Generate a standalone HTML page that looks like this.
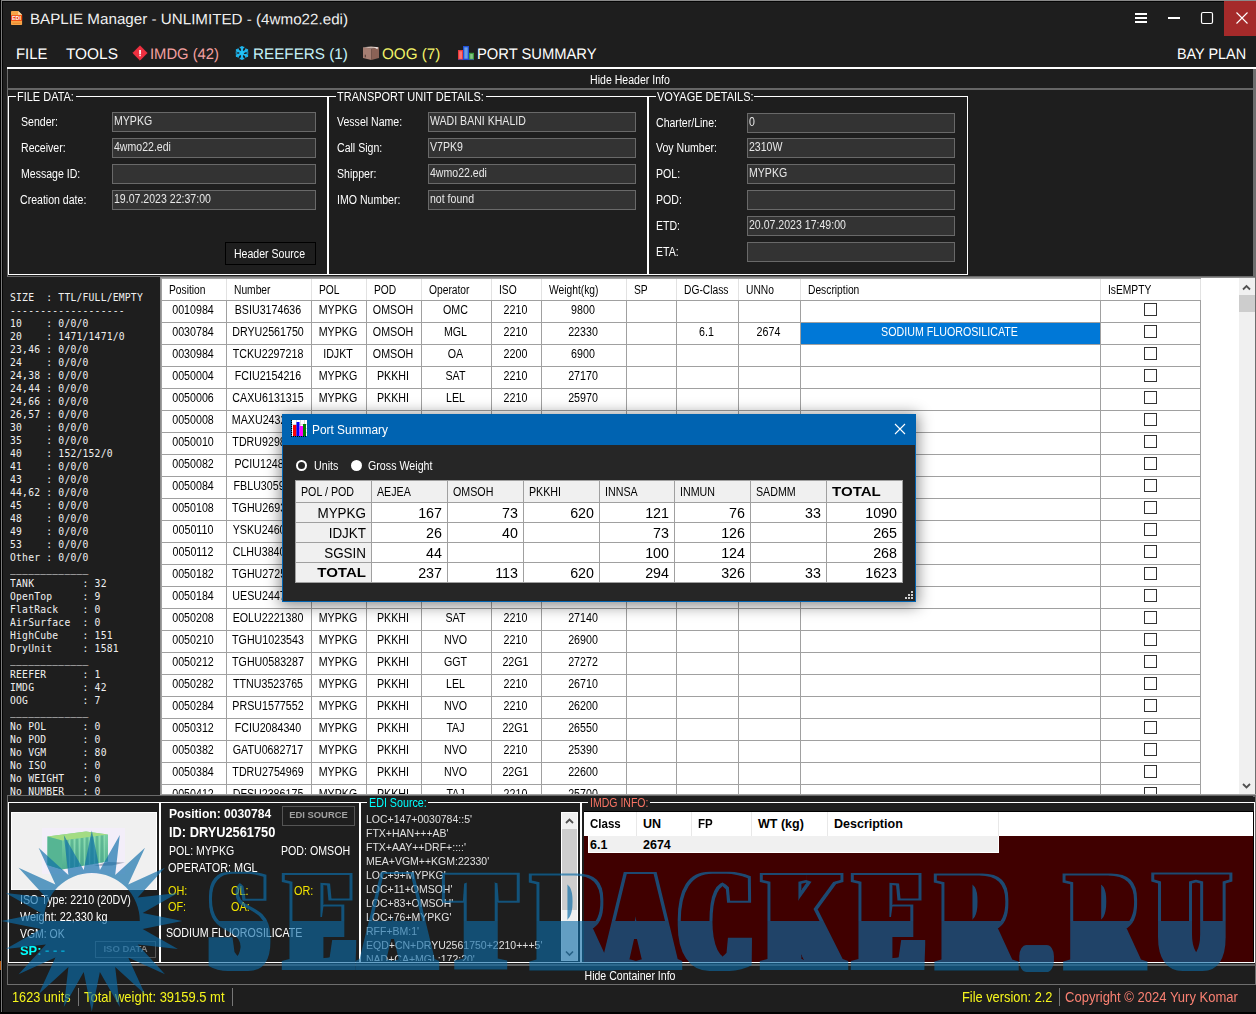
<!DOCTYPE html><html><head><meta charset="utf-8"><title>BAPLIE Manager</title><style>
*{box-sizing:border-box;margin:0;padding:0}
html,body{width:1256px;height:1014px;overflow:hidden;background:#1e1e1e}
body{position:relative;font-family:"Liberation Sans",sans-serif;font-size:12px;color:#fff;line-height:1}
.a{position:absolute}
.t{position:absolute;white-space:pre;transform-origin:0 0;line-height:14px;height:14px}
.tc{position:absolute;white-space:pre;text-align:center;transform-origin:50% 0;line-height:14px;height:14px}
.tr{position:absolute;white-space:pre;text-align:right;transform-origin:100% 0;line-height:14px;height:14px}
.tb{position:absolute;height:20px;background:#333;border:1px solid #696969}
.mono{font-family:"DejaVu Sans Mono","Liberation Mono",monospace;font-size:9.7px;letter-spacing:0.21px;line-height:13px;white-space:pre;color:#f0f0f0}
.gb{position:absolute;border:1px solid #fff}
.gl{position:absolute;background:#1e1e1e;height:14px;white-space:pre;line-height:14px;transform-origin:0 0}
.menu{position:absolute;top:45px;font-size:15.3px;line-height:18px;height:18px;white-space:pre;transform-origin:0 0}
</style></head><body>
<div class="a" style="left:0px;top:0px;width:1256px;height:1px;background:#8a8a8a;"></div>
<div class="a" style="left:0px;top:1px;width:1256px;height:1px;background:#050505;"></div>
<div class="a" style="left:0px;top:0px;width:1px;height:1014px;background:#000;"></div>
<div class="a" style="left:1px;top:0px;width:1px;height:1014px;background:#7a7a7a;"></div>
<div class="a" style="left:2px;top:1px;width:1px;height:1013px;background:#050505;"></div>
<div class="a" style="left:0px;top:1012px;width:1256px;height:2px;background:#000;"></div>
<svg class="a" style="left:10px;top:10px" width="14" height="16" viewBox="10 10 14 16">
<path d="M11 11.800Q11 11 11.800 11H18.200L22.100 14.700V24.300Q22.100 25.100 21.300 25.100H11.800Q11 25.100 11 24.300Z" fill="#f8a448"/>
<path d="M18.200 11L22.100 14.700H18.200Z" fill="#fdd9a8"/>
<rect x="11" y="15.300" width="11.100" height="5.500" fill="#f23f0c"/>
<rect x="12.500" y="22.800" width="8" height="0.900" fill="#e8852a"/>
<text x="16.500" y="20.100" font-family="Liberation Sans, sans-serif" font-weight="bold" font-size="5.400" fill="#fff" text-anchor="middle">EDI</text>
</svg>
<div class="t" style="left:29.5px;top:10px;color:#f0f0f0;font-size:15px;line-height:18px;height:18px;transform:scaleX(1.012) rotate(0.05deg);">BAPLIE Manager - UNLIMITED - (4wmo22.edi)</div>
<svg class="a" style="left:1120px;top:1px" width="136" height="36" viewBox="0 0 136 36">
<rect x="104" y="0" width="32" height="35" fill="#a52a2a"/>
<g stroke="#fff" stroke-width="2" fill="none">
<path d="M15 13H27M15 17H27M15 21H27"/>
<path d="M48 17H60"/>
</g>
<rect x="81.5" y="11.5" width="11" height="11" rx="1.5" fill="none" stroke="#fff" stroke-width="1.2"/>
<path d="M116.500 11.500L127.500 22.500M127.500 11.500L116.500 22.500" stroke="#fff" stroke-width="1.1" fill="none"/>
</svg>
<div class="menu" style="left:16px;color:#fff;transform:scaleX(0.971) rotate(0.05deg)">FILE</div>
<div class="menu" style="left:66px;color:#fff;transform:scaleX(1.007) rotate(0.05deg)">TOOLS</div>
<div class="menu" style="left:150px;color:#f4a0a0;transform:scaleX(0.966) rotate(0.05deg)">IMDG (42)</div>
<div class="menu" style="left:253px;color:#c4f2f8;transform:scaleX(0.997) rotate(0.05deg)">REEFERS (1)</div>
<div class="menu" style="left:382px;color:#f4f468;transform:scaleX(0.996) rotate(0.05deg)">OOG (7)</div>
<div class="menu" style="left:477px;color:#fff;transform:scaleX(0.963) rotate(0.05deg)">PORT SUMMARY</div>
<div class="menu" style="left:1176.5px;color:#fff;transform:scaleX(0.941) rotate(0.05deg)">BAY PLAN</div>
<svg class="a" style="left:132px;top:45px" width="16" height="16" viewBox="0 0 16 16">
<path d="M8 0.8L15.2 8L8 15.2L0.8 8Z" fill="#ee3040" stroke="#ee3040" stroke-width="0.8" stroke-linejoin="round"/>
<rect x="7.1" y="5" width="1.9" height="4.400" fill="#fbe4e6"/><rect x="7.1" y="10.100" width="1.9" height="1.100" fill="#fbe4e6"/></svg>
<svg class="a" style="left:234px;top:45px" width="16" height="16" viewBox="0 0 16 16">
<g stroke="#1fb6ee" stroke-linecap="round" fill="none">
<path d="M8 2V14M2.800 5L13.200 11M13.200 5L2.800 11" stroke-width="2.100"/>
<path d="M6.200 2.300L8 3.900L9.800 2.300M6.200 13.700L8 12.100L9.800 13.700M2.200 7.200L4.500 6.300L4.100 3.800M13.800 8.800L11.500 9.700L11.900 12.200M13.800 7.200L11.500 6.300L11.900 3.800M2.200 8.800L4.500 9.700L4.100 12.200" stroke-width="1.300"/>
</g><circle cx="8" cy="8" r="2" fill="#22c4f6"/></svg>
<svg class="a" style="left:362px;top:45px" width="18" height="16" viewBox="362 45 18 16">
<path d="M363 47.300L371.300 48.500V59.900L363 58.100Z" fill="#a57e72"/>
<path d="M371.300 48.500L379 47.300V58.100L371.300 59.900Z" fill="#8b6256"/>
<path d="M363 47.300L371 46.600L379 47.300L371.300 48.600Z" fill="#cdb6ad"/>
<path d="M373.500 47.300L377.800 47.100L377.600 49.300Z" fill="#efe6e2"/>
<rect x="364.800" y="54.700" width="0.900" height="2.600" fill="#40302c"/>
</svg>
<svg class="a" style="left:457px;top:45px" width="18" height="16" viewBox="457 45 18 16">
<rect x="458" y="50" width="5.200" height="10" fill="#ee3a3a"/><rect x="459.200" y="51.300" width="2.800" height="7.500" fill="#fa7474"/>
<rect x="463" y="46" width="6" height="14" fill="#1f4fd6"/><rect x="464.300" y="47.300" width="3.400" height="11.400" fill="#6c9fe6"/>
<rect x="469" y="52.800" width="5" height="7.200" fill="#3c9c3c"/><rect x="470.200" y="54" width="2.600" height="4.800" fill="#86c486"/>
<rect x="458" y="59.200" width="16" height="0.900" fill="#2a3fc0" opacity=".7"/>
</svg>
<div class="a" style="left:7px;top:67px;width:1249px;height:2px;background:#fff;"></div>
<div class="a" style="left:7px;top:69px;width:1px;height:208px;background:#6a6a6a;"></div>
<div class="a" style="left:7px;top:88px;width:1249px;height:2px;background:#666;"></div>
<div class="a" style="left:1253px;top:69px;width:2px;height:728px;background:#6e6e6e;"></div>
<div class="tc" style="left:480px;top:73px;transform:scaleX(0.88);width:300px;">Hide Header Info</div>
<div class="gb" style="left:8px;top:96px;width:320px;height:179px;border-color:#fff"></div>
<div class="gl" style="left:16px;top:90px;width:60px"></div>
<div class="t" style="left:17px;top:90px;transform:scaleX(0.878);color:#fff;font-size:12.5px;">FILE DATA:</div>
<div class="gb" style="left:328px;top:96px;width:320px;height:179px;border-color:#fff"></div>
<div class="gl" style="left:336px;top:90px;width:150px"></div>
<div class="t" style="left:337px;top:90px;transform:scaleX(0.878);color:#fff;font-size:12.5px;">TRANSPORT UNIT DETAILS:</div>
<div class="gb" style="left:648px;top:96px;width:320px;height:179px;border-color:#fff"></div>
<div class="gl" style="left:656px;top:90px;width:98px"></div>
<div class="t" style="left:657px;top:90px;transform:scaleX(0.878);color:#fff;font-size:12.5px;">VOYAGE DETAILS:</div>
<div class="t" style="left:21px;top:115px;transform:scaleX(0.88);">Sender:</div>
<div class="tb" style="left:112px;top:112px;width:204px"></div>
<div class="t" style="left:114px;top:114px;transform:scaleX(0.88);color:#e8e8e8;">MYPKG</div>
<div class="t" style="left:21px;top:141px;transform:scaleX(0.88);">Receiver:</div>
<div class="tb" style="left:112px;top:138px;width:204px"></div>
<div class="t" style="left:114px;top:140px;transform:scaleX(0.88);color:#e8e8e8;">4wmo22.edi</div>
<div class="t" style="left:21px;top:167px;transform:scaleX(0.88);">Message ID:</div>
<div class="tb" style="left:112px;top:164px;width:204px"></div>
<div class="t" style="left:20px;top:193px;transform:scaleX(0.88);">Creation date:</div>
<div class="tb" style="left:112px;top:190px;width:204px"></div>
<div class="t" style="left:114px;top:192px;transform:scaleX(0.88);color:#e8e8e8;">19.07.2023 22:37:00</div>
<div class="t" style="left:337px;top:115px;transform:scaleX(0.88);">Vessel Name:</div>
<div class="tb" style="left:428px;top:112px;width:208px"></div>
<div class="t" style="left:430px;top:114px;transform:scaleX(0.88);color:#e8e8e8;">WADI BANI KHALID</div>
<div class="t" style="left:337px;top:141px;transform:scaleX(0.88);">Call Sign:</div>
<div class="tb" style="left:428px;top:138px;width:208px"></div>
<div class="t" style="left:430px;top:140px;transform:scaleX(0.88);color:#e8e8e8;">V7PK9</div>
<div class="t" style="left:337px;top:167px;transform:scaleX(0.88);">Shipper:</div>
<div class="tb" style="left:428px;top:164px;width:208px"></div>
<div class="t" style="left:430px;top:166px;transform:scaleX(0.88);color:#e8e8e8;">4wmo22.edi</div>
<div class="t" style="left:337px;top:193px;transform:scaleX(0.88);">IMO Number:</div>
<div class="tb" style="left:428px;top:190px;width:208px"></div>
<div class="t" style="left:430px;top:192px;transform:scaleX(0.88);color:#e8e8e8;">not found</div>
<div class="t" style="left:656px;top:116px;transform:scaleX(0.88);">Charter/Line:</div>
<div class="tb" style="left:747px;top:113px;width:208px"></div>
<div class="t" style="left:749px;top:115px;transform:scaleX(0.88);color:#e8e8e8;">0</div>
<div class="t" style="left:656px;top:141px;transform:scaleX(0.88);">Voy Number:</div>
<div class="tb" style="left:747px;top:138px;width:208px"></div>
<div class="t" style="left:749px;top:140px;transform:scaleX(0.88);color:#e8e8e8;">2310W</div>
<div class="t" style="left:656px;top:167px;transform:scaleX(0.88);">POL:</div>
<div class="tb" style="left:747px;top:164px;width:208px"></div>
<div class="t" style="left:749px;top:166px;transform:scaleX(0.88);color:#e8e8e8;">MYPKG</div>
<div class="t" style="left:656px;top:193px;transform:scaleX(0.88);">POD:</div>
<div class="tb" style="left:747px;top:190px;width:208px"></div>
<div class="t" style="left:656px;top:219px;transform:scaleX(0.88);">ETD:</div>
<div class="tb" style="left:747px;top:216px;width:208px"></div>
<div class="t" style="left:749px;top:218px;transform:scaleX(0.88);color:#e8e8e8;">20.07.2023 17:49:00</div>
<div class="t" style="left:656px;top:245px;transform:scaleX(0.88);">ETA:</div>
<div class="tb" style="left:747px;top:242px;width:208px"></div>
<div class="a" style="left:225px;top:242px;width:91px;height:23px;background:#1e1e1e;border:1px solid #000"></div>
<div class="tc" style="left:224px;top:247px;transform:scaleX(0.88);width:91px;">Header Source</div>
<div class="a" style="left:7px;top:276px;width:1249px;height:1px;background:#6a6a6a;"></div>
<div class="a mono" style="left:10px;top:290.5px;width:150px;height:504px;overflow:hidden">SIZE  : TTL/FULL/EMPTY
-------------------
10    : 0/0/0
20    : 1471/1471/0
23,46 : 0/0/0
24    : 0/0/0
24,38 : 0/0/0
24,44 : 0/0/0
24,66 : 0/0/0
26,57 : 0/0/0
30    : 0/0/0
35    : 0/0/0
40    : 152/152/0
41    : 0/0/0
43    : 0/0/0
44,62 : 0/0/0
45    : 0/0/0
48    : 0/0/0
49    : 0/0/0
53    : 0/0/0
Other : 0/0/0
<span style="position:relative;top:-2px;color:#fff">_____________</span>
TANK        : 32
OpenTop     : 9
FlatRack    : 0
AirSurface  : 0
HighCube    : 151
DryUnit     : 1581
<span style="position:relative;top:-2px;color:#fff">_____________</span>
REEFER      : 1
IMDG        : 42
OOG         : 7
<span style="position:relative;top:-2px;color:#fff">_____________</span>
No POL      : 0
No POD      : 0
No VGM      : 80
No ISO      : 0
No WEIGHT   : 0
No NUMBER   : 0</div>
<div class="a" style="left:160px;top:277px;width:1096px;height:517px;background:#fff;overflow:hidden;color:#000" id="grid">
<div class="a" style="left:0px;top:0px;width:1096px;height:1px;background:#8c8c8c"></div>
<div class="a" style="left:0px;top:1px;width:1041px;height:1px;background:#a0a0a0"></div>
<div class="a" style="left:0px;top:0px;width:1px;height:519px;background:#8c8c8c"></div>
<div class="a" style="left:1px;top:1px;width:1px;height:519px;background:#a0a0a0"></div>
<div class="a" style="left:66px;top:2px;width:1px;height:21px;background:#e2e2e2"></div>
<div class="a" style="left:151px;top:2px;width:1px;height:21px;background:#e2e2e2"></div>
<div class="a" style="left:206px;top:2px;width:1px;height:21px;background:#e2e2e2"></div>
<div class="a" style="left:261px;top:2px;width:1px;height:21px;background:#e2e2e2"></div>
<div class="a" style="left:331px;top:2px;width:1px;height:21px;background:#e2e2e2"></div>
<div class="a" style="left:381px;top:2px;width:1px;height:21px;background:#e2e2e2"></div>
<div class="a" style="left:466px;top:2px;width:1px;height:21px;background:#e2e2e2"></div>
<div class="a" style="left:516px;top:2px;width:1px;height:21px;background:#e2e2e2"></div>
<div class="a" style="left:578px;top:2px;width:1px;height:21px;background:#e2e2e2"></div>
<div class="a" style="left:640px;top:2px;width:1px;height:21px;background:#e2e2e2"></div>
<div class="a" style="left:940px;top:2px;width:1px;height:21px;background:#e2e2e2"></div>
<div class="a" style="left:1040px;top:2px;width:1px;height:21px;background:#e2e2e2"></div>
<div class="t" style="left:9px;top:6px;transform:scaleX(0.855);">Position</div>
<div class="t" style="left:74px;top:6px;transform:scaleX(0.855);">Number</div>
<div class="t" style="left:159px;top:6px;transform:scaleX(0.855);">POL</div>
<div class="t" style="left:214px;top:6px;transform:scaleX(0.855);">POD</div>
<div class="t" style="left:269px;top:6px;transform:scaleX(0.855);">Operator</div>
<div class="t" style="left:339px;top:6px;transform:scaleX(0.855);">ISO</div>
<div class="t" style="left:389px;top:6px;transform:scaleX(0.855);">Weight(kg)</div>
<div class="t" style="left:474px;top:6px;transform:scaleX(0.855);">SP</div>
<div class="t" style="left:524px;top:6px;transform:scaleX(0.855);">DG-Class</div>
<div class="t" style="left:586px;top:6px;transform:scaleX(0.855);">UNNo</div>
<div class="t" style="left:648px;top:6px;transform:scaleX(0.855);">Description</div>
<div class="t" style="left:948px;top:6px;transform:scaleX(0.855);">IsEMPTY</div>
<div class="a" style="left:1px;top:23px;width:1040px;height:1px;background:#a0a0a0"></div>
<div class="a" style="left:1px;top:45px;width:1040px;height:1px;background:#a0a0a0"></div>
<div class="a" style="left:1px;top:67px;width:1040px;height:1px;background:#a0a0a0"></div>
<div class="a" style="left:1px;top:89px;width:1040px;height:1px;background:#a0a0a0"></div>
<div class="a" style="left:1px;top:111px;width:1040px;height:1px;background:#a0a0a0"></div>
<div class="a" style="left:1px;top:133px;width:1040px;height:1px;background:#a0a0a0"></div>
<div class="a" style="left:1px;top:155px;width:1040px;height:1px;background:#a0a0a0"></div>
<div class="a" style="left:1px;top:177px;width:1040px;height:1px;background:#a0a0a0"></div>
<div class="a" style="left:1px;top:199px;width:1040px;height:1px;background:#a0a0a0"></div>
<div class="a" style="left:1px;top:221px;width:1040px;height:1px;background:#a0a0a0"></div>
<div class="a" style="left:1px;top:243px;width:1040px;height:1px;background:#a0a0a0"></div>
<div class="a" style="left:1px;top:265px;width:1040px;height:1px;background:#a0a0a0"></div>
<div class="a" style="left:1px;top:287px;width:1040px;height:1px;background:#a0a0a0"></div>
<div class="a" style="left:1px;top:309px;width:1040px;height:1px;background:#a0a0a0"></div>
<div class="a" style="left:1px;top:331px;width:1040px;height:1px;background:#a0a0a0"></div>
<div class="a" style="left:1px;top:353px;width:1040px;height:1px;background:#a0a0a0"></div>
<div class="a" style="left:1px;top:375px;width:1040px;height:1px;background:#a0a0a0"></div>
<div class="a" style="left:1px;top:397px;width:1040px;height:1px;background:#a0a0a0"></div>
<div class="a" style="left:1px;top:419px;width:1040px;height:1px;background:#a0a0a0"></div>
<div class="a" style="left:1px;top:441px;width:1040px;height:1px;background:#a0a0a0"></div>
<div class="a" style="left:1px;top:463px;width:1040px;height:1px;background:#a0a0a0"></div>
<div class="a" style="left:1px;top:485px;width:1040px;height:1px;background:#a0a0a0"></div>
<div class="a" style="left:1px;top:507px;width:1040px;height:1px;background:#a0a0a0"></div>
<div class="a" style="left:1px;top:529px;width:1040px;height:1px;background:#a0a0a0"></div>
<div class="a" style="left:66px;top:23px;width:1px;height:500px;background:#a0a0a0"></div>
<div class="a" style="left:151px;top:23px;width:1px;height:500px;background:#a0a0a0"></div>
<div class="a" style="left:206px;top:23px;width:1px;height:500px;background:#a0a0a0"></div>
<div class="a" style="left:261px;top:23px;width:1px;height:500px;background:#a0a0a0"></div>
<div class="a" style="left:331px;top:23px;width:1px;height:500px;background:#a0a0a0"></div>
<div class="a" style="left:381px;top:23px;width:1px;height:500px;background:#a0a0a0"></div>
<div class="a" style="left:466px;top:23px;width:1px;height:500px;background:#a0a0a0"></div>
<div class="a" style="left:516px;top:23px;width:1px;height:500px;background:#a0a0a0"></div>
<div class="a" style="left:578px;top:23px;width:1px;height:500px;background:#a0a0a0"></div>
<div class="a" style="left:640px;top:23px;width:1px;height:500px;background:#a0a0a0"></div>
<div class="a" style="left:940px;top:23px;width:1px;height:500px;background:#a0a0a0"></div>
<div class="a" style="left:1040px;top:23px;width:1px;height:500px;background:#a0a0a0"></div>
<div class="a" style="left:641px;top:46px;width:299px;height:21px;background:#0078d7"></div>
<div class="tc" style="left:1px;top:26px;transform:scaleX(0.89);width:64px;">0010984</div>
<div class="tc" style="left:66px;top:26px;transform:scaleX(0.89);width:84px;">BSIU3174636</div>
<div class="tc" style="left:151px;top:26px;transform:scaleX(0.89);width:54px;">MYPKG</div>
<div class="tc" style="left:206px;top:26px;transform:scaleX(0.89);width:54px;">OMSOH</div>
<div class="tc" style="left:261px;top:26px;transform:scaleX(0.89);width:69px;">OMC</div>
<div class="tc" style="left:331px;top:26px;transform:scaleX(0.89);width:49px;">2210</div>
<div class="tc" style="left:381px;top:26px;transform:scaleX(0.89);width:84px;">9800</div>
<div class="a" style="left:984px;top:26px;width:13px;height:13px;border:1px solid #333;background:#fff"></div>
<div class="tc" style="left:1px;top:48px;transform:scaleX(0.89);width:64px;">0030784</div>
<div class="tc" style="left:66px;top:48px;transform:scaleX(0.89);width:84px;">DRYU2561750</div>
<div class="tc" style="left:151px;top:48px;transform:scaleX(0.89);width:54px;">MYPKG</div>
<div class="tc" style="left:206px;top:48px;transform:scaleX(0.89);width:54px;">OMSOH</div>
<div class="tc" style="left:261px;top:48px;transform:scaleX(0.89);width:69px;">MGL</div>
<div class="tc" style="left:331px;top:48px;transform:scaleX(0.89);width:49px;">2210</div>
<div class="tc" style="left:381px;top:48px;transform:scaleX(0.89);width:84px;">22330</div>
<div class="tc" style="left:516px;top:48px;transform:scaleX(0.89);width:61px;">6.1</div>
<div class="tc" style="left:578px;top:48px;transform:scaleX(0.89);width:61px;">2674</div>
<div class="tc" style="left:640px;top:48px;transform:scaleX(0.89);width:299px;color:#fff;">SODIUM FLUOROSILICATE</div>
<div class="a" style="left:984px;top:48px;width:13px;height:13px;border:1px solid #333;background:#fff"></div>
<div class="tc" style="left:1px;top:70px;transform:scaleX(0.89);width:64px;">0030984</div>
<div class="tc" style="left:66px;top:70px;transform:scaleX(0.89);width:84px;">TCKU2297218</div>
<div class="tc" style="left:151px;top:70px;transform:scaleX(0.89);width:54px;">IDJKT</div>
<div class="tc" style="left:206px;top:70px;transform:scaleX(0.89);width:54px;">OMSOH</div>
<div class="tc" style="left:261px;top:70px;transform:scaleX(0.89);width:69px;">OA</div>
<div class="tc" style="left:331px;top:70px;transform:scaleX(0.89);width:49px;">2200</div>
<div class="tc" style="left:381px;top:70px;transform:scaleX(0.89);width:84px;">6900</div>
<div class="a" style="left:984px;top:70px;width:13px;height:13px;border:1px solid #333;background:#fff"></div>
<div class="tc" style="left:1px;top:92px;transform:scaleX(0.89);width:64px;">0050004</div>
<div class="tc" style="left:66px;top:92px;transform:scaleX(0.89);width:84px;">FCIU2154216</div>
<div class="tc" style="left:151px;top:92px;transform:scaleX(0.89);width:54px;">MYPKG</div>
<div class="tc" style="left:206px;top:92px;transform:scaleX(0.89);width:54px;">PKKHI</div>
<div class="tc" style="left:261px;top:92px;transform:scaleX(0.89);width:69px;">SAT</div>
<div class="tc" style="left:331px;top:92px;transform:scaleX(0.89);width:49px;">2210</div>
<div class="tc" style="left:381px;top:92px;transform:scaleX(0.89);width:84px;">27170</div>
<div class="a" style="left:984px;top:92px;width:13px;height:13px;border:1px solid #333;background:#fff"></div>
<div class="tc" style="left:1px;top:114px;transform:scaleX(0.89);width:64px;">0050006</div>
<div class="tc" style="left:66px;top:114px;transform:scaleX(0.89);width:84px;">CAXU6131315</div>
<div class="tc" style="left:151px;top:114px;transform:scaleX(0.89);width:54px;">MYPKG</div>
<div class="tc" style="left:206px;top:114px;transform:scaleX(0.89);width:54px;">PKKHI</div>
<div class="tc" style="left:261px;top:114px;transform:scaleX(0.89);width:69px;">LEL</div>
<div class="tc" style="left:331px;top:114px;transform:scaleX(0.89);width:49px;">2210</div>
<div class="tc" style="left:381px;top:114px;transform:scaleX(0.89);width:84px;">25970</div>
<div class="a" style="left:984px;top:114px;width:13px;height:13px;border:1px solid #333;background:#fff"></div>
<div class="tc" style="left:1px;top:136px;transform:scaleX(0.89);width:64px;">0050008</div>
<div class="tc" style="left:66px;top:136px;transform:scaleX(0.89);width:84px;">MAXU2432190</div>
<div class="tc" style="left:151px;top:136px;transform:scaleX(0.89);width:54px;">MYPKG</div>
<div class="tc" style="left:206px;top:136px;transform:scaleX(0.89);width:54px;">PKKHI</div>
<div class="tc" style="left:261px;top:136px;transform:scaleX(0.89);width:69px;">SAT</div>
<div class="tc" style="left:331px;top:136px;transform:scaleX(0.89);width:49px;">2210</div>
<div class="tc" style="left:381px;top:136px;transform:scaleX(0.89);width:84px;">26480</div>
<div class="a" style="left:984px;top:136px;width:13px;height:13px;border:1px solid #333;background:#fff"></div>
<div class="tc" style="left:1px;top:158px;transform:scaleX(0.89);width:64px;">0050010</div>
<div class="tc" style="left:66px;top:158px;transform:scaleX(0.89);width:84px;">TDRU9298844</div>
<div class="tc" style="left:151px;top:158px;transform:scaleX(0.89);width:54px;">MYPKG</div>
<div class="tc" style="left:206px;top:158px;transform:scaleX(0.89);width:54px;">PKKHI</div>
<div class="tc" style="left:261px;top:158px;transform:scaleX(0.89);width:69px;">NVO</div>
<div class="tc" style="left:331px;top:158px;transform:scaleX(0.89);width:49px;">2210</div>
<div class="tc" style="left:381px;top:158px;transform:scaleX(0.89);width:84px;">26100</div>
<div class="a" style="left:984px;top:158px;width:13px;height:13px;border:1px solid #333;background:#fff"></div>
<div class="tc" style="left:1px;top:180px;transform:scaleX(0.89);width:64px;">0050082</div>
<div class="tc" style="left:66px;top:180px;transform:scaleX(0.89);width:84px;">PCIU1248756</div>
<div class="tc" style="left:151px;top:180px;transform:scaleX(0.89);width:54px;">MYPKG</div>
<div class="tc" style="left:206px;top:180px;transform:scaleX(0.89);width:54px;">PKKHI</div>
<div class="tc" style="left:261px;top:180px;transform:scaleX(0.89);width:69px;">TAJ</div>
<div class="tc" style="left:331px;top:180px;transform:scaleX(0.89);width:49px;">2210</div>
<div class="tc" style="left:381px;top:180px;transform:scaleX(0.89);width:84px;">25880</div>
<div class="a" style="left:984px;top:180px;width:13px;height:13px;border:1px solid #333;background:#fff"></div>
<div class="tc" style="left:1px;top:202px;transform:scaleX(0.89);width:64px;">0050084</div>
<div class="tc" style="left:66px;top:202px;transform:scaleX(0.89);width:84px;">FBLU3059121</div>
<div class="tc" style="left:151px;top:202px;transform:scaleX(0.89);width:54px;">MYPKG</div>
<div class="tc" style="left:206px;top:202px;transform:scaleX(0.89);width:54px;">PKKHI</div>
<div class="tc" style="left:261px;top:202px;transform:scaleX(0.89);width:69px;">LEL</div>
<div class="tc" style="left:331px;top:202px;transform:scaleX(0.89);width:49px;">2210</div>
<div class="tc" style="left:381px;top:202px;transform:scaleX(0.89);width:84px;">26340</div>
<div class="a" style="left:984px;top:202px;width:13px;height:13px;border:1px solid #333;background:#fff"></div>
<div class="tc" style="left:1px;top:224px;transform:scaleX(0.89);width:64px;">0050108</div>
<div class="tc" style="left:66px;top:224px;transform:scaleX(0.89);width:84px;">TGHU2693375</div>
<div class="tc" style="left:151px;top:224px;transform:scaleX(0.89);width:54px;">MYPKG</div>
<div class="tc" style="left:206px;top:224px;transform:scaleX(0.89);width:54px;">PKKHI</div>
<div class="tc" style="left:261px;top:224px;transform:scaleX(0.89);width:69px;">NVO</div>
<div class="tc" style="left:331px;top:224px;transform:scaleX(0.89);width:49px;">2210</div>
<div class="tc" style="left:381px;top:224px;transform:scaleX(0.89);width:84px;">27010</div>
<div class="a" style="left:984px;top:224px;width:13px;height:13px;border:1px solid #333;background:#fff"></div>
<div class="tc" style="left:1px;top:246px;transform:scaleX(0.89);width:64px;">0050110</div>
<div class="tc" style="left:66px;top:246px;transform:scaleX(0.89);width:84px;">YSKU2460982</div>
<div class="tc" style="left:151px;top:246px;transform:scaleX(0.89);width:54px;">MYPKG</div>
<div class="tc" style="left:206px;top:246px;transform:scaleX(0.89);width:54px;">PKKHI</div>
<div class="tc" style="left:261px;top:246px;transform:scaleX(0.89);width:69px;">GGT</div>
<div class="tc" style="left:331px;top:246px;transform:scaleX(0.89);width:49px;">2210</div>
<div class="tc" style="left:381px;top:246px;transform:scaleX(0.89);width:84px;">26720</div>
<div class="a" style="left:984px;top:246px;width:13px;height:13px;border:1px solid #333;background:#fff"></div>
<div class="tc" style="left:1px;top:268px;transform:scaleX(0.89);width:64px;">0050112</div>
<div class="tc" style="left:66px;top:268px;transform:scaleX(0.89);width:84px;">CLHU3840517</div>
<div class="tc" style="left:151px;top:268px;transform:scaleX(0.89);width:54px;">MYPKG</div>
<div class="tc" style="left:206px;top:268px;transform:scaleX(0.89);width:54px;">PKKHI</div>
<div class="tc" style="left:261px;top:268px;transform:scaleX(0.89);width:69px;">SAT</div>
<div class="tc" style="left:331px;top:268px;transform:scaleX(0.89);width:49px;">2210</div>
<div class="tc" style="left:381px;top:268px;transform:scaleX(0.89);width:84px;">25640</div>
<div class="a" style="left:984px;top:268px;width:13px;height:13px;border:1px solid #333;background:#fff"></div>
<div class="tc" style="left:1px;top:290px;transform:scaleX(0.89);width:64px;">0050182</div>
<div class="tc" style="left:66px;top:290px;transform:scaleX(0.89);width:84px;">TGHU2725643</div>
<div class="tc" style="left:151px;top:290px;transform:scaleX(0.89);width:54px;">MYPKG</div>
<div class="tc" style="left:206px;top:290px;transform:scaleX(0.89);width:54px;">PKKHI</div>
<div class="tc" style="left:261px;top:290px;transform:scaleX(0.89);width:69px;">NVO</div>
<div class="tc" style="left:331px;top:290px;transform:scaleX(0.89);width:49px;">2210</div>
<div class="tc" style="left:381px;top:290px;transform:scaleX(0.89);width:84px;">26930</div>
<div class="a" style="left:984px;top:290px;width:13px;height:13px;border:1px solid #333;background:#fff"></div>
<div class="tc" style="left:1px;top:312px;transform:scaleX(0.89);width:64px;">0050184</div>
<div class="tc" style="left:66px;top:312px;transform:scaleX(0.89);width:84px;">UESU2447190</div>
<div class="tc" style="left:151px;top:312px;transform:scaleX(0.89);width:54px;">MYPKG</div>
<div class="tc" style="left:206px;top:312px;transform:scaleX(0.89);width:54px;">PKKHI</div>
<div class="tc" style="left:261px;top:312px;transform:scaleX(0.89);width:69px;">LEL</div>
<div class="tc" style="left:331px;top:312px;transform:scaleX(0.89);width:49px;">2210</div>
<div class="tc" style="left:381px;top:312px;transform:scaleX(0.89);width:84px;">26250</div>
<div class="a" style="left:984px;top:312px;width:13px;height:13px;border:1px solid #333;background:#fff"></div>
<div class="tc" style="left:1px;top:334px;transform:scaleX(0.89);width:64px;">0050208</div>
<div class="tc" style="left:66px;top:334px;transform:scaleX(0.89);width:84px;">EOLU2221380</div>
<div class="tc" style="left:151px;top:334px;transform:scaleX(0.89);width:54px;">MYPKG</div>
<div class="tc" style="left:206px;top:334px;transform:scaleX(0.89);width:54px;">PKKHI</div>
<div class="tc" style="left:261px;top:334px;transform:scaleX(0.89);width:69px;">SAT</div>
<div class="tc" style="left:331px;top:334px;transform:scaleX(0.89);width:49px;">2210</div>
<div class="tc" style="left:381px;top:334px;transform:scaleX(0.89);width:84px;">27140</div>
<div class="a" style="left:984px;top:334px;width:13px;height:13px;border:1px solid #333;background:#fff"></div>
<div class="tc" style="left:1px;top:356px;transform:scaleX(0.89);width:64px;">0050210</div>
<div class="tc" style="left:66px;top:356px;transform:scaleX(0.89);width:84px;">TGHU1023543</div>
<div class="tc" style="left:151px;top:356px;transform:scaleX(0.89);width:54px;">MYPKG</div>
<div class="tc" style="left:206px;top:356px;transform:scaleX(0.89);width:54px;">PKKHI</div>
<div class="tc" style="left:261px;top:356px;transform:scaleX(0.89);width:69px;">NVO</div>
<div class="tc" style="left:331px;top:356px;transform:scaleX(0.89);width:49px;">2210</div>
<div class="tc" style="left:381px;top:356px;transform:scaleX(0.89);width:84px;">26900</div>
<div class="a" style="left:984px;top:356px;width:13px;height:13px;border:1px solid #333;background:#fff"></div>
<div class="tc" style="left:1px;top:378px;transform:scaleX(0.89);width:64px;">0050212</div>
<div class="tc" style="left:66px;top:378px;transform:scaleX(0.89);width:84px;">TGHU0583287</div>
<div class="tc" style="left:151px;top:378px;transform:scaleX(0.89);width:54px;">MYPKG</div>
<div class="tc" style="left:206px;top:378px;transform:scaleX(0.89);width:54px;">PKKHI</div>
<div class="tc" style="left:261px;top:378px;transform:scaleX(0.89);width:69px;">GGT</div>
<div class="tc" style="left:331px;top:378px;transform:scaleX(0.89);width:49px;">22G1</div>
<div class="tc" style="left:381px;top:378px;transform:scaleX(0.89);width:84px;">27272</div>
<div class="a" style="left:984px;top:378px;width:13px;height:13px;border:1px solid #333;background:#fff"></div>
<div class="tc" style="left:1px;top:400px;transform:scaleX(0.89);width:64px;">0050282</div>
<div class="tc" style="left:66px;top:400px;transform:scaleX(0.89);width:84px;">TTNU3523765</div>
<div class="tc" style="left:151px;top:400px;transform:scaleX(0.89);width:54px;">MYPKG</div>
<div class="tc" style="left:206px;top:400px;transform:scaleX(0.89);width:54px;">PKKHI</div>
<div class="tc" style="left:261px;top:400px;transform:scaleX(0.89);width:69px;">LEL</div>
<div class="tc" style="left:331px;top:400px;transform:scaleX(0.89);width:49px;">2210</div>
<div class="tc" style="left:381px;top:400px;transform:scaleX(0.89);width:84px;">26710</div>
<div class="a" style="left:984px;top:400px;width:13px;height:13px;border:1px solid #333;background:#fff"></div>
<div class="tc" style="left:1px;top:422px;transform:scaleX(0.89);width:64px;">0050284</div>
<div class="tc" style="left:66px;top:422px;transform:scaleX(0.89);width:84px;">PRSU1577552</div>
<div class="tc" style="left:151px;top:422px;transform:scaleX(0.89);width:54px;">MYPKG</div>
<div class="tc" style="left:206px;top:422px;transform:scaleX(0.89);width:54px;">PKKHI</div>
<div class="tc" style="left:261px;top:422px;transform:scaleX(0.89);width:69px;">NVO</div>
<div class="tc" style="left:331px;top:422px;transform:scaleX(0.89);width:49px;">2210</div>
<div class="tc" style="left:381px;top:422px;transform:scaleX(0.89);width:84px;">26200</div>
<div class="a" style="left:984px;top:422px;width:13px;height:13px;border:1px solid #333;background:#fff"></div>
<div class="tc" style="left:1px;top:444px;transform:scaleX(0.89);width:64px;">0050312</div>
<div class="tc" style="left:66px;top:444px;transform:scaleX(0.89);width:84px;">FCIU2084340</div>
<div class="tc" style="left:151px;top:444px;transform:scaleX(0.89);width:54px;">MYPKG</div>
<div class="tc" style="left:206px;top:444px;transform:scaleX(0.89);width:54px;">PKKHI</div>
<div class="tc" style="left:261px;top:444px;transform:scaleX(0.89);width:69px;">TAJ</div>
<div class="tc" style="left:331px;top:444px;transform:scaleX(0.89);width:49px;">22G1</div>
<div class="tc" style="left:381px;top:444px;transform:scaleX(0.89);width:84px;">26550</div>
<div class="a" style="left:984px;top:444px;width:13px;height:13px;border:1px solid #333;background:#fff"></div>
<div class="tc" style="left:1px;top:466px;transform:scaleX(0.89);width:64px;">0050382</div>
<div class="tc" style="left:66px;top:466px;transform:scaleX(0.89);width:84px;">GATU0682717</div>
<div class="tc" style="left:151px;top:466px;transform:scaleX(0.89);width:54px;">MYPKG</div>
<div class="tc" style="left:206px;top:466px;transform:scaleX(0.89);width:54px;">PKKHI</div>
<div class="tc" style="left:261px;top:466px;transform:scaleX(0.89);width:69px;">NVO</div>
<div class="tc" style="left:331px;top:466px;transform:scaleX(0.89);width:49px;">2210</div>
<div class="tc" style="left:381px;top:466px;transform:scaleX(0.89);width:84px;">25390</div>
<div class="a" style="left:984px;top:466px;width:13px;height:13px;border:1px solid #333;background:#fff"></div>
<div class="tc" style="left:1px;top:488px;transform:scaleX(0.89);width:64px;">0050384</div>
<div class="tc" style="left:66px;top:488px;transform:scaleX(0.89);width:84px;">TDRU2754969</div>
<div class="tc" style="left:151px;top:488px;transform:scaleX(0.89);width:54px;">MYPKG</div>
<div class="tc" style="left:206px;top:488px;transform:scaleX(0.89);width:54px;">PKKHI</div>
<div class="tc" style="left:261px;top:488px;transform:scaleX(0.89);width:69px;">NVO</div>
<div class="tc" style="left:331px;top:488px;transform:scaleX(0.89);width:49px;">22G1</div>
<div class="tc" style="left:381px;top:488px;transform:scaleX(0.89);width:84px;">22600</div>
<div class="a" style="left:984px;top:488px;width:13px;height:13px;border:1px solid #333;background:#fff"></div>
<div class="tc" style="left:1px;top:510px;transform:scaleX(0.89);width:64px;">0050412</div>
<div class="tc" style="left:66px;top:510px;transform:scaleX(0.89);width:84px;">DFSU2386175</div>
<div class="tc" style="left:151px;top:510px;transform:scaleX(0.89);width:54px;">MYPKG</div>
<div class="tc" style="left:206px;top:510px;transform:scaleX(0.89);width:54px;">PKKHI</div>
<div class="tc" style="left:261px;top:510px;transform:scaleX(0.89);width:69px;">TAJ</div>
<div class="tc" style="left:331px;top:510px;transform:scaleX(0.89);width:49px;">2210</div>
<div class="tc" style="left:381px;top:510px;transform:scaleX(0.89);width:84px;">25700</div>
<div class="a" style="left:984px;top:510px;width:13px;height:13px;border:1px solid #333;background:#fff"></div>
<div class="a" style="left:1079px;top:1px;width:16px;height:516px;background:#f0f0f0"></div>
<div class="a" style="left:1079px;top:18px;width:16px;height:17px;background:#cdcdcd"></div>
<svg class="a" style="left:1079px;top:0px" width="15" height="518" viewBox="0 0 15 518"><path d="M4 12.500L7.500 9L11 12.500" stroke="#505050" stroke-width="1.8" fill="none"/><path d="M4 507L7.500 510.500L11 507" stroke="#505050" stroke-width="1.8" fill="none"/></svg>
</div>
<div class="a" style="left:1255px;top:69px;width:1px;height:916px;background:#6e6e6e;"></div>
<div class="a" style="left:282px;top:414px;width:634px;height:188px;background:#262626;border:1px solid #0063b1;box-shadow:0 2px 14px 2px rgba(0,0,0,.45);color:#000" id="dlg">
<div class="a" style="left:0px;top:0px;width:632px;height:30px;background:#0063b1;"></div>
<svg class="a" style="left:8px;top:5px" width="16" height="17" viewBox="0 0 16 17">
<rect x="1" y="0" width="15" height="16" fill="#fff"/>
<path d="M1 4.500H16M1 8.500H16M1 12.500H16M5.500 0V16M9.500 0V16M13.500 0V16" stroke="#c0c0c0" stroke-width="0.6"/>
<rect x="2" y="5" width="3.500" height="11" fill="#f00"/>
<rect x="5.500" y="2" width="3" height="14" fill="#00f"/>
<rect x="8.500" y="6" width="3.500" height="10" fill="#f0f"/>
<rect x="12" y="4" width="3" height="12" fill="#008000"/>
<path d="M0.5 0V17M0 16.500H16" stroke="#000" stroke-width="1" stroke-dasharray="1 1"/>
</svg>
<div class="t" style="left:29px;top:7px;transform:scaleX(0.967);color:#fff;font-size:12.3px;line-height:16px;height:16px;">Port Summary</div>
<svg class="a" style="left:611px;top:8px" width="12" height="12" viewBox="0 0 12 12"><path d="M1 1L11 11M11 1L1 11" stroke="#fff" stroke-width="1.1"/></svg>
<div class="a" style="left:13px;top:45px;width:11px;height:11px;border-radius:50%;border:2px solid #fff;background:#262626"></div>
<div class="a" style="left:68px;top:45px;width:11px;height:11px;border-radius:50%;background:#fff"></div>
<div class="t" style="left:31px;top:44px;transform:scaleX(0.89);color:#fff;">Units</div>
<div class="t" style="left:85px;top:44px;transform:scaleX(0.89);color:#fff;">Gross Weight</div>
<div class="a" style="left:12px;top:65px;width:608px;height:103px;background:#a0a0a0;"></div>
<div class="a" style="left:13px;top:66px;width:75px;height:21px;background:#f0f0f0;"></div>
<div class="t" style="left:18px;top:70px;transform:scaleX(0.89);">POL / POD</div>
<div class="a" style="left:89px;top:66px;width:75px;height:21px;background:#f0f0f0;"></div>
<div class="t" style="left:94px;top:70px;transform:scaleX(0.89);">AEJEA</div>
<div class="a" style="left:165px;top:66px;width:75px;height:21px;background:#f0f0f0;"></div>
<div class="t" style="left:170px;top:70px;transform:scaleX(0.89);">OMSOH</div>
<div class="a" style="left:241px;top:66px;width:75px;height:21px;background:#f0f0f0;"></div>
<div class="t" style="left:246px;top:70px;transform:scaleX(0.89);">PKKHI</div>
<div class="a" style="left:317px;top:66px;width:74px;height:21px;background:#f0f0f0;"></div>
<div class="t" style="left:322px;top:70px;transform:scaleX(0.89);">INNSA</div>
<div class="a" style="left:392px;top:66px;width:75px;height:21px;background:#f0f0f0;"></div>
<div class="t" style="left:397px;top:70px;transform:scaleX(0.89);">INMUN</div>
<div class="a" style="left:468px;top:66px;width:75px;height:21px;background:#f0f0f0;"></div>
<div class="t" style="left:473px;top:70px;transform:scaleX(0.89);">SADMM</div>
<div class="a" style="left:544px;top:66px;width:75px;height:21px;background:#f0f0f0;"></div>
<div class="t" style="left:549px;top:69px;transform:scaleX(1.1);font-size:13.7px;font-weight:bold;line-height:16px;height:16px;">TOTAL</div>
<div class="a" style="left:13px;top:88px;width:75px;height:19px;background:#f0f0f0;"></div>
<div class="tr" style="left:13px;top:90px;transform:scaleX(0.96);width:70px;font-size:14px;line-height:16px;height:16px;">MYPKG</div>
<div class="a" style="left:89px;top:88px;width:75px;height:19px;background:#fff;"></div>
<div class="tr" style="left:89px;top:90px;transform:scaleX(1.02);width:70px;font-size:14px;line-height:16px;height:16px;">167</div>
<div class="a" style="left:165px;top:88px;width:75px;height:19px;background:#fff;"></div>
<div class="tr" style="left:165px;top:90px;transform:scaleX(1.02);width:70px;font-size:14px;line-height:16px;height:16px;">73</div>
<div class="a" style="left:241px;top:88px;width:75px;height:19px;background:#fff;"></div>
<div class="tr" style="left:241px;top:90px;transform:scaleX(1.02);width:70px;font-size:14px;line-height:16px;height:16px;">620</div>
<div class="a" style="left:317px;top:88px;width:74px;height:19px;background:#fff;"></div>
<div class="tr" style="left:317px;top:90px;transform:scaleX(1.02);width:69px;font-size:14px;line-height:16px;height:16px;">121</div>
<div class="a" style="left:392px;top:88px;width:75px;height:19px;background:#fff;"></div>
<div class="tr" style="left:392px;top:90px;transform:scaleX(1.02);width:70px;font-size:14px;line-height:16px;height:16px;">76</div>
<div class="a" style="left:468px;top:88px;width:75px;height:19px;background:#fff;"></div>
<div class="tr" style="left:468px;top:90px;transform:scaleX(1.02);width:70px;font-size:14px;line-height:16px;height:16px;">33</div>
<div class="a" style="left:544px;top:88px;width:75px;height:19px;background:#fff;"></div>
<div class="tr" style="left:544px;top:90px;transform:scaleX(1.02);width:70px;font-size:14px;line-height:16px;height:16px;">1090</div>
<div class="a" style="left:13px;top:108px;width:75px;height:19px;background:#f0f0f0;"></div>
<div class="tr" style="left:13px;top:110px;transform:scaleX(0.96);width:70px;font-size:14px;line-height:16px;height:16px;">IDJKT</div>
<div class="a" style="left:89px;top:108px;width:75px;height:19px;background:#fff;"></div>
<div class="tr" style="left:89px;top:110px;transform:scaleX(1.02);width:70px;font-size:14px;line-height:16px;height:16px;">26</div>
<div class="a" style="left:165px;top:108px;width:75px;height:19px;background:#fff;"></div>
<div class="tr" style="left:165px;top:110px;transform:scaleX(1.02);width:70px;font-size:14px;line-height:16px;height:16px;">40</div>
<div class="a" style="left:241px;top:108px;width:75px;height:19px;background:#fff;"></div>
<div class="a" style="left:317px;top:108px;width:74px;height:19px;background:#fff;"></div>
<div class="tr" style="left:317px;top:110px;transform:scaleX(1.02);width:69px;font-size:14px;line-height:16px;height:16px;">73</div>
<div class="a" style="left:392px;top:108px;width:75px;height:19px;background:#fff;"></div>
<div class="tr" style="left:392px;top:110px;transform:scaleX(1.02);width:70px;font-size:14px;line-height:16px;height:16px;">126</div>
<div class="a" style="left:468px;top:108px;width:75px;height:19px;background:#fff;"></div>
<div class="a" style="left:544px;top:108px;width:75px;height:19px;background:#fff;"></div>
<div class="tr" style="left:544px;top:110px;transform:scaleX(1.02);width:70px;font-size:14px;line-height:16px;height:16px;">265</div>
<div class="a" style="left:13px;top:128px;width:75px;height:19px;background:#f0f0f0;"></div>
<div class="tr" style="left:13px;top:130px;transform:scaleX(0.96);width:70px;font-size:14px;line-height:16px;height:16px;">SGSIN</div>
<div class="a" style="left:89px;top:128px;width:75px;height:19px;background:#fff;"></div>
<div class="tr" style="left:89px;top:130px;transform:scaleX(1.02);width:70px;font-size:14px;line-height:16px;height:16px;">44</div>
<div class="a" style="left:165px;top:128px;width:75px;height:19px;background:#fff;"></div>
<div class="a" style="left:241px;top:128px;width:75px;height:19px;background:#fff;"></div>
<div class="a" style="left:317px;top:128px;width:74px;height:19px;background:#fff;"></div>
<div class="tr" style="left:317px;top:130px;transform:scaleX(1.02);width:69px;font-size:14px;line-height:16px;height:16px;">100</div>
<div class="a" style="left:392px;top:128px;width:75px;height:19px;background:#fff;"></div>
<div class="tr" style="left:392px;top:130px;transform:scaleX(1.02);width:70px;font-size:14px;line-height:16px;height:16px;">124</div>
<div class="a" style="left:468px;top:128px;width:75px;height:19px;background:#fff;"></div>
<div class="a" style="left:544px;top:128px;width:75px;height:19px;background:#fff;"></div>
<div class="tr" style="left:544px;top:130px;transform:scaleX(1.02);width:70px;font-size:14px;line-height:16px;height:16px;">268</div>
<div class="a" style="left:13px;top:148px;width:75px;height:19px;background:#f0f0f0;"></div>
<div class="tr" style="left:13px;top:150px;transform:scaleX(1.1);width:70px;font-size:13.7px;font-weight:bold;line-height:16px;height:16px;">TOTAL</div>
<div class="a" style="left:89px;top:148px;width:75px;height:19px;background:#fff;"></div>
<div class="tr" style="left:89px;top:150px;transform:scaleX(1.02);width:70px;font-size:14px;line-height:16px;height:16px;">237</div>
<div class="a" style="left:165px;top:148px;width:75px;height:19px;background:#fff;"></div>
<div class="tr" style="left:165px;top:150px;transform:scaleX(1.02);width:70px;font-size:14px;line-height:16px;height:16px;">113</div>
<div class="a" style="left:241px;top:148px;width:75px;height:19px;background:#fff;"></div>
<div class="tr" style="left:241px;top:150px;transform:scaleX(1.02);width:70px;font-size:14px;line-height:16px;height:16px;">620</div>
<div class="a" style="left:317px;top:148px;width:74px;height:19px;background:#fff;"></div>
<div class="tr" style="left:317px;top:150px;transform:scaleX(1.02);width:69px;font-size:14px;line-height:16px;height:16px;">294</div>
<div class="a" style="left:392px;top:148px;width:75px;height:19px;background:#fff;"></div>
<div class="tr" style="left:392px;top:150px;transform:scaleX(1.02);width:70px;font-size:14px;line-height:16px;height:16px;">326</div>
<div class="a" style="left:468px;top:148px;width:75px;height:19px;background:#fff;"></div>
<div class="tr" style="left:468px;top:150px;transform:scaleX(1.02);width:70px;font-size:14px;line-height:16px;height:16px;">33</div>
<div class="a" style="left:544px;top:148px;width:75px;height:19px;background:#fff;"></div>
<div class="tr" style="left:544px;top:150px;transform:scaleX(1.02);width:70px;font-size:14px;line-height:16px;height:16px;">1623</div>
<svg class="a" style="left:620px;top:174px" width="11" height="11" viewBox="0 0 11 11"><g fill="#d0d0d0"><rect x="8" y="2" width="2" height="2"/><rect x="5" y="5" width="2" height="2"/><rect x="8" y="5" width="2" height="2"/><rect x="2" y="8" width="2" height="2"/><rect x="5" y="8" width="2" height="2"/><rect x="8" y="8" width="2" height="2"/></g></svg>
</div>
<div class="a" style="left:160px;top:794px;width:1096px;height:1px;background:#a0a0a0;"></div>
<div class="a" style="left:7px;top:795px;width:1249px;height:1px;background:#6a6a6a;"></div>
<div class="a" style="left:7px;top:796px;width:1px;height:189px;background:#6a6a6a;"></div>
<div class="a" style="left:0px;top:961px;width:1px;height:9px;background:#b85a10;"></div>
<div class="a" style="left:8px;top:802px;width:152px;height:161px;border:1px solid #fff"></div>
<div class="a" style="left:11px;top:812px;width:146px;height:78px;background:#f0f0f0;border:1px solid #fff;border-bottom-color:#f8f8f8;"></div>
<svg class="a" style="left:42px;top:828px" width="83" height="46" viewBox="0 0 83 46">
<defs><linearGradient id="cg" x1="0" y1="0" x2="0" y2="1"><stop offset="0" stop-color="#7fd3a6"/><stop offset="1" stop-color="#4fae90"/></linearGradient></defs>
<rect width="83" height="46" fill="#f3eef9"/>
<path d="M66 34L83 34.500L70 37.500L52 38Z" fill="#8d93a6" opacity=".75"/>
<path d="M5.500 8.500L44 3.500L66 6.500V33.500L20 41.500L5.500 37Z" fill="url(#cg)"/>
<path d="M5.500 8.500L44 3.500L66 6.500L20 12.500Z" fill="#a4dc84"/>
<path d="M5.500 8.500L20 12.500V41.500L5.500 37Z" fill="#56b593"/>
<g stroke="#4da78a" stroke-width="1.3" opacity=".8"><path d="M25 12V40.600M30 11.300V39.700M35 10.700V38.900M40 10V38M45 9.400V37.100M50 8.700V36.300M55 8.100V35.400M60 7.400V34.500"/></g>
<g stroke="#9be3bd" stroke-width="1" opacity=".6"><path d="M27.500 11.700V40.200M32.500 11V39.300M37.500 10.400V38.400M42.500 9.700V37.600M47.500 9.100V36.700M52.500 8.400V35.800M57.500 7.800V35M62.500 7.100V34.100"/></g>
</svg>
<div class="t" style="left:20px;top:893px;transform:scaleX(0.855);font-size:12.5px;">ISO Type: 2210 (20DV)</div>
<div class="t" style="left:20px;top:910px;transform:scaleX(0.87);font-size:12.5px;">Weight: 22,330 kg</div>
<div class="t" style="left:20px;top:927px;transform:scaleX(0.834);font-size:12.5px;">VGM: OK</div>
<div class="t" style="left:20px;top:944px;transform:scaleX(1.03);color:#00ffff;font-size:12.5px;font-weight:bold;">SP: - - -</div>
<div class="a" style="left:95px;top:941px;width:61px;height:17px;border:1px solid #555"></div>
<div class="tc" style="left:95px;top:942px;transform:scaleX(1.12);color:#8a8a8a;font-size:8.5px;width:61px;font-weight:bold;">ISO DATA</div>
<div class="a" style="left:160px;top:802px;width:200px;height:161px;border:1px solid #fff"></div>
<div class="t" style="left:169px;top:806px;transform:scaleX(0.93);font-size:13px;font-weight:bold;line-height:16px;height:16px;">Position: 0030784</div>
<div class="t" style="left:169px;top:824px;transform:scaleX(0.915);font-size:14px;font-weight:bold;line-height:16px;height:16px;">ID: DRYU2561750</div>
<div class="a" style="left:282px;top:806px;width:73px;height:20px;border:1px solid #555"></div>
<div class="tc" style="left:282px;top:807.5px;transform:scaleX(1.11);color:#a0a0a0;font-size:8.5px;width:73px;font-weight:bold;">EDI SOURCE</div>
<div class="t" style="left:169px;top:844px;transform:scaleX(0.845);font-size:12.5px;">POL: MYPKG</div>
<div class="t" style="left:281px;top:844px;transform:scaleX(0.85);font-size:12.5px;">POD: OMSOH</div>
<div class="t" style="left:168px;top:861px;transform:scaleX(0.87);font-size:12.5px;">OPERATOR: MGL</div>
<div class="t" style="left:168px;top:884px;transform:scaleX(0.87);color:#f2e400;font-size:12.5px;">OH:</div>
<div class="t" style="left:231px;top:884px;transform:scaleX(0.87);color:#f2e400;font-size:12.5px;">OL:</div>
<div class="t" style="left:294px;top:884px;transform:scaleX(0.87);color:#f2e400;font-size:12.5px;">OR:</div>
<div class="t" style="left:168px;top:900px;transform:scaleX(0.87);color:#f2e400;font-size:12.5px;">OF:</div>
<div class="t" style="left:231px;top:900px;transform:scaleX(0.87);color:#f2e400;font-size:12.5px;">OA:</div>
<div class="t" style="left:166px;top:926px;transform:scaleX(0.886);">SODIUM FLUOROSILICATE</div>
<div class="gb" style="left:360px;top:802px;width:221px;height:161px"></div>
<div class="gl" style="left:367px;top:798px;width:61px;height:9px"></div>
<div class="t" style="left:369px;top:796px;transform:scaleX(0.857);color:#00ffff;font-size:12.5px;">EDI Source:</div>
<div class="a" style="left:362px;top:812px;width:199px;height:149px;overflow:hidden">
<div class="t" style="left:4px;top:0px;font-size:11px;color:#e0e0e0;transform:scaleX(.955)">LOC+147+0030784::5'</div>
<div class="t" style="left:4px;top:14px;font-size:11px;color:#e0e0e0;transform:scaleX(.955)">FTX+HAN+++AB'</div>
<div class="t" style="left:4px;top:28px;font-size:11px;color:#e0e0e0;transform:scaleX(.955)">FTX+AAY++DRF+::::'</div>
<div class="t" style="left:4px;top:42px;font-size:11px;color:#e0e0e0;transform:scaleX(.955)">MEA+VGM++KGM:22330'</div>
<div class="t" style="left:4px;top:56px;font-size:11px;color:#e0e0e0;transform:scaleX(.955)">LOC+9+MYPKG'</div>
<div class="t" style="left:4px;top:70px;font-size:11px;color:#e0e0e0;transform:scaleX(.955)">LOC+11+OMSOH'</div>
<div class="t" style="left:4px;top:84px;font-size:11px;color:#e0e0e0;transform:scaleX(.955)">LOC+83+OMSOH'</div>
<div class="t" style="left:4px;top:98px;font-size:11px;color:#e0e0e0;transform:scaleX(.955)">LOC+76+MYPKG'</div>
<div class="t" style="left:4px;top:112px;font-size:11px;color:#e0e0e0;transform:scaleX(.955)">RFF+BM:1'</div>
<div class="t" style="left:4px;top:126px;font-size:11px;color:#e0e0e0;transform:scaleX(.955)">EQD+CN+DRYU2561750+2210+++5'</div>
<div class="t" style="left:4px;top:140px;font-size:11px;color:#e0e0e0;transform:scaleX(.955)">NAD+CA+MGL:172:20'</div>
</div>
<div class="a" style="left:561px;top:812px;width:17px;height:149px;background:#f0f0f0;border:1px solid #fff;"></div>
<div class="a" style="left:562px;top:829px;width:15px;height:81px;background:#cdcdcd;"></div>
<svg class="a" style="left:561px;top:812px" width="17" height="149" viewBox="0 0 17 149"><path d="M5 11L8.500 7.500L12 11" stroke="#505050" stroke-width="1.8" fill="none"/><path d="M5 139.500L8.500 143L12 139.500" stroke="#505050" stroke-width="1.6" fill="none"/></svg>
<div class="gb" style="left:581px;top:802px;width:674px;height:161px"></div>
<div class="a" style="left:584px;top:803px;width:670px;height:159px;background:#1e1e1e;"></div>
<div class="a" style="left:584px;top:836px;width:670px;height:126px;background:#400000;"></div>
<div class="a" style="left:584px;top:812px;width:669px;height:24px;background:#fff;"></div>
<div class="a" style="left:588px;top:836px;width:411px;height:17px;background:#f0f0f0;"></div>
<div class="a" style="left:588px;top:836px;width:1px;height:17px;background:#fff;"></div>
<div class="a" style="left:998px;top:836px;width:1px;height:17px;background:#fff;"></div>
<div class="a" style="left:588px;top:852px;width:411px;height:1px;background:#fff;"></div>
<div class="a" style="left:584px;top:811px;width:670px;height:1px;background:#000;"></div>
<div class="a" style="left:1253px;top:811px;width:1px;height:151px;background:#050000;"></div>
<div class="gl" style="left:588px;top:798px;width:62px;height:9px"></div>
<div class="t" style="left:590px;top:796px;transform:scaleX(0.842);color:#f87464;font-size:12.5px;">IMDG INFO:</div>
<div class="t" style="left:590px;top:817px;transform:scaleX(0.92);color:#000;font-size:12.5px;font-weight:bold;">Class</div>
<div class="t" style="left:643px;top:817px;color:#000;font-size:12.5px;font-weight:bold;">UN</div>
<div class="t" style="left:698px;top:817px;transform:scaleX(0.92);color:#000;font-size:12.5px;font-weight:bold;">FP</div>
<div class="t" style="left:758px;top:817px;color:#000;font-size:12.5px;font-weight:bold;">WT (kg)</div>
<div class="t" style="left:834px;top:817px;color:#000;font-size:12.5px;font-weight:bold;">Description</div>
<div class="t" style="left:590px;top:838px;color:#000;font-size:12.5px;font-weight:bold;">6.1</div>
<div class="t" style="left:643px;top:838px;color:#000;font-size:12.5px;font-weight:bold;">2674</div>
<div class="a" style="left:636px;top:812px;width:1px;height:24px;background:#e8e8e8;"></div>
<div class="a" style="left:691px;top:812px;width:1px;height:24px;background:#e8e8e8;"></div>
<div class="a" style="left:751px;top:812px;width:1px;height:24px;background:#e8e8e8;"></div>
<div class="a" style="left:827px;top:812px;width:1px;height:24px;background:#e8e8e8;"></div>
<div class="a" style="left:998px;top:812px;width:1px;height:24px;background:#e8e8e8;"></div>
<div class="a" style="left:7px;top:964px;width:1249px;height:2px;background:#626262;"></div>
<div class="a" style="left:7px;top:984px;width:1249px;height:1px;background:#6e6e6e;"></div>
<div class="tc" style="left:480px;top:969px;transform:scaleX(0.88);width:300px;">Hide Container Info</div>
<div class="t" style="left:12px;top:989px;transform:scaleX(0.876);color:#f6f61c;font-size:14.5px;line-height:16px;height:16px;">1623 units</div>
<div class="a" style="left:78px;top:988px;width:1px;height:18px;background:#777;"></div>
<div class="t" style="left:84px;top:989px;transform:scaleX(0.894);color:#f6f61c;font-size:14.5px;line-height:16px;height:16px;">Total weight: 39159.5 mt</div>
<div class="a" style="left:232px;top:988px;width:1px;height:18px;background:#777;"></div>
<div class="t" style="left:961.5px;top:989px;transform:scaleX(0.884);color:#f6f61c;font-size:14.5px;line-height:16px;height:16px;">File version: 2.2</div>
<div class="a" style="left:1059px;top:988px;width:1px;height:18px;background:#777;"></div>
<div class="t" style="left:1065.3px;top:989px;transform:scaleX(0.898);color:#fa8072;font-size:14.5px;line-height:16px;height:16px;">Copyright © 2024 Yury Komar</div>
<svg class="a" style="left:0;top:800px;pointer-events:none" width="1256" height="214" viewBox="0 800 1256 214">
<defs>
<clipPath id="lower"><rect x="0" y="921" width="1256" height="100"/></clipPath>
<clipPath id="upper"><rect x="0" y="800" width="1256" height="121"/></clipPath>
<filter id="fat" filterUnits="userSpaceOnUse" x="150" y="850" width="1106" height="140">
<feMorphology in="SourceAlpha" operator="dilate" radius="9.500 2" result="o"/>
<feFlood flood-color="#0b6ca8"/><feComposite operator="in" in2="o"/>
</filter>
<filter id="ring" filterUnits="userSpaceOnUse" x="150" y="850" width="1106" height="140">
<feMorphology in="SourceAlpha" operator="dilate" radius="9.500 2" result="o"/>
<feMorphology in="SourceAlpha" operator="dilate" radius="7.200 0.010" result="i"/>
<feComposite in="o" in2="i" operator="out" result="r"/>
<feFlood flood-color="#0b6ca8"/><feComposite operator="in" in2="r"/>
</filter>
</defs>
<path d="M91.8 830.5 L99.9 870.1 L119.8 834.9 L115.2 875.1 L145.0 847.8 L128.2 884.6 L165.0 867.8 L137.7 897.6 L177.9 893.0 L142.7 912.9 L182.3 921.0 L142.7 929.1 L177.9 949.0 L137.7 944.4 L165.0 974.2 L128.2 957.4 L145.0 994.2 L115.2 966.9 L119.8 1007.1 L99.9 971.9 L91.8 1011.5 L83.7 971.9 L63.8 1007.1 L68.4 966.9 L38.6 994.2 L55.4 957.4 L18.6 974.2 L45.9 944.4 L5.7 949.0 L40.9 929.1 L1.3 921.0 L40.9 912.9 L5.7 893.0 L45.9 897.6 L18.6 867.8 L55.4 884.6 L38.6 847.8 L68.4 875.1 L63.8 834.9 L83.7 870.1Z M43.8 921.0 A48 48 0 0 1 139.8 921.0Z" fill="#0b6ca8" fill-opacity=".66" fill-rule="evenodd"/>
<g clip-path="url(#upper)" opacity=".68"><g filter="url(#ring)"><text transform="scale(0.64,1)" x="334.0 453.4 569.1 703.8 839.4 948.7 1067.6 1200.5 1342.5 1472.2 1601.8 1673.4 1811.0" y="967.8" font-family="Liberation Serif, serif" font-weight="bold" font-size="142">SEATRACKER.RU</text></g></g>
<g clip-path="url(#lower)" opacity=".62"><g filter="url(#fat)"><text transform="scale(0.64,1)" x="334.0 453.4 569.1 703.8 839.4 948.7 1067.6 1200.5 1342.5 1472.2 1601.8 1673.4 1811.0" y="967.8" font-family="Liberation Serif, serif" font-weight="bold" font-size="142">SEATRACKER.RU</text></g></g>
</svg>
</body></html>
